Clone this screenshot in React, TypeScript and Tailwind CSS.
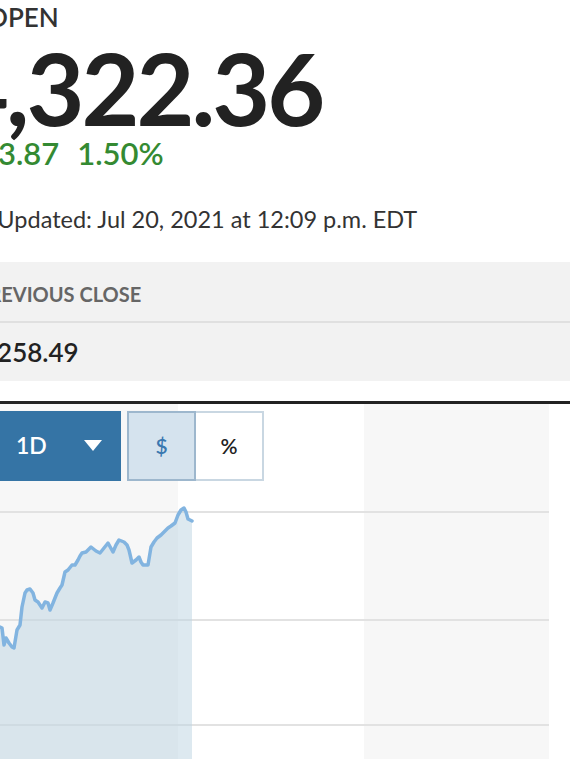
const pts: [number, number][] = [
  [0, 627], [2, 628], [4, 645], [6, 638], [9, 643], [12, 647], [14, 648], [17, 630],
  [20, 625], [22, 607], [25, 593], [27, 590], [30, 589], [33, 593], [35, 600], [38, 602],
  [42, 608], [45, 602], [48, 603], [50, 610], [53, 603], [57, 593], [60, 588], [62, 585],
  [65, 572], [68, 570], [72, 565], [75, 565], [78, 560], [80, 556], [82, 553], [86, 552],
  [91, 547], [96, 551], [100, 553], [104, 548], [108, 543], [113, 552], [116, 545], [119, 540],
  [124, 542], [127, 545], [129, 550], [132, 563], [136, 560], [139, 557], [141, 562], [143, 565],
  [148, 565], [151, 547], [154, 542], [157, 538], [161, 535], [164, 532], [168, 528], [171, 526],
  [175, 523], [178, 515], [181, 510], [184, 508], [186, 512], [188, 519], [192, 521],
];

function Chart() {
  const top = 404;
  const line = pts.map(([x, y], i) => `${i ? "L" : "M"}${x},${y - top}`).join(" ");
  const area = `${line} L192,355 L0,355 Z`;
  return (
    <svg className="absolute inset-0" width="570" height="355" viewBox="0 0 570 355">
      <rect x="0" y="0" width="178" height="355" fill="#f7f7f7" />
      <rect x="364" y="0" width="185" height="355" fill="#f7f7f7" />
      {[108, 216, 321].map((y) => (
        <line key={y} x1="0" x2="549" y1={y} y2={y} stroke="#e2e2e2" strokeWidth="2" />
      ))}
      <path d={area} fill="rgb(187,211,225)" fillOpacity="0.5" />
      <path d={line} fill="none" stroke="#82b4e0" strokeWidth="3.5" strokeLinejoin="round" strokeLinecap="round" />
    </svg>
  );
}

export default function App() {
  return (
    <div className="w-[570px] h-[759px] overflow-hidden bg-white font-['Lato',sans-serif] text-[#222]">
      <div className="pt-[4px] ml-[-13px] text-[26px] leading-none font-semibold text-[#333]">OPEN</div>
      <div className="mt-[7px] ml-[-49px] text-[100px] leading-none font-bold tracking-[-3px]">4,322.36</div>
      <div className="mt-[1px] ml-[-20px] flex gap-[18px] text-[31px] leading-none font-semibold text-[#348a32]">
        <span>63.87</span>
        <span>1.50%</span>
      </div>
      <div className="mt-[39px] ml-[-51px] text-[23.5px] leading-none text-[#333]">
        Last Updated: Jul 20, 2021 at 12:09 p.m. EDT
      </div>
      <div className="mt-[30px] ml-[-40px] bg-[#f2f2f2]">
        <div className="h-[61px] pl-[16px] pt-[6px] flex items-center text-[20px] leading-none font-bold uppercase text-[#666] border-b-2 border-[#e0e0e0]">
          Previous Close
        </div>
        <div className="h-[58px] pl-[16px] flex items-center text-[26px] leading-none font-semibold text-[#222]">
          4,258.49
        </div>
      </div>
      <div className="mt-[20px] border-t-[3px] border-[#222]" />
      <div className="relative h-[355px]">
        <Chart />
        <div className="relative pt-[7px] ml-[-20px] flex gap-[6px]">
          <button className="w-[141px] h-[70px] bg-[#3574a5] text-white flex items-center pl-[36px] text-[23px] font-semibold">
            <span>1D</span>
            <svg className="ml-[37px]" width="18" height="12" viewBox="0 0 18 12">
              <path d="M0 0 L18 0 L9 11 Z" fill="white" />
            </svg>
          </button>
          <div className="flex">
            <button className="w-[69px] h-[70px] bg-[#d5e3ee] border-2 border-[#9db7cd] text-[#3a78b0] text-[21px] font-semibold">
              $
            </button>
            <button className="w-[68px] h-[70px] bg-white border-2 border-l-0 border-[#c9d7e2] text-[#222] text-[21px] font-semibold">
              %
            </button>
          </div>
        </div>
      </div>
    </div>
  );
}
